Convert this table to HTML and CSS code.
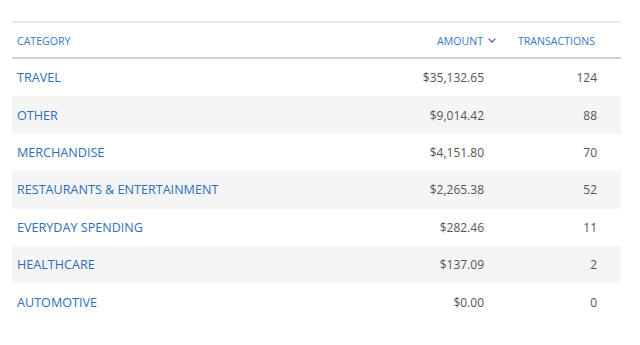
FILE: index.html
```html
<!DOCTYPE html>
<html>
<head>
<meta charset="utf-8">
<link rel="stylesheet" href="styles.css">
</head>
<body>
<table class="spend">
  <thead>
    <tr>
      <th class="col-cat">CATEGORY</th>
      <th class="col-amt">AMOUNT<svg class="chev" width="8" height="5" viewBox="0 0 8 5"><path d="M0.6 0.6 L4 4 L7.4 0.6" fill="none" stroke="#6a5d9e" stroke-width="1.3"/></svg></th>
      <th class="col-tx">TRANSACTIONS</th>
    </tr>
  </thead>
  <tbody>
    <tr><td class="col-cat">TRAVEL</td><td class="col-amt">$35,132.65</td><td class="col-tx">124</td></tr>
    <tr><td class="col-cat">OTHER</td><td class="col-amt">$9,014.42</td><td class="col-tx">88</td></tr>
    <tr><td class="col-cat">MERCHANDISE</td><td class="col-amt">$4,151.80</td><td class="col-tx">70</td></tr>
    <tr><td class="col-cat">RESTAURANTS &amp; ENTERTAINMENT</td><td class="col-amt">$2,265.38</td><td class="col-tx">52</td></tr>
    <tr><td class="col-cat">EVERYDAY SPENDING</td><td class="col-amt">$282.46</td><td class="col-tx">11</td></tr>
    <tr><td class="col-cat">HEALTHCARE</td><td class="col-amt">$137.09</td><td class="col-tx">2</td></tr>
    <tr><td class="col-cat">AUTOMOTIVE</td><td class="col-amt">$0.00</td><td class="col-tx">0</td></tr>
  </tbody>
</table>
</body>
</html>
```
FILE: styles.css
```css
html, body {
  margin: 0;
  padding: 0;
  background: #fff;
}
body {
  padding: 21px 0 0 12px;
  font-family: "Open Sans", "Noto Sans", sans-serif;
}
.spend {
  width: 609px;
  border-collapse: collapse;
  border-top: 2px solid #e8e8e8;
}
.spend th {
  height: 33px;
  font-size: 10.6px;
  font-weight: normal;
  color: #3a78c2;
  border-bottom: 2px solid #d0d0d0;
  padding: 0;
  vertical-align: middle;
  padding-top: 1px;
}
.spend td {
  height: 37.4px;
  padding: 0;
  font-size: 12px;
  vertical-align: middle;
  color: #555;
}
.spend tbody tr:nth-child(even) td {
  background: #f5f5f5;
}
.spend .col-cat {
  text-align: left;
  padding-left: 5px;
}
.spend td.col-cat {
  color: #2e6eb8;
  font-size: 12.6px;
}
.spend .col-amt {
  text-align: right;
  width: 150px;
  padding-right: 15px;
}
.spend th.col-amt {
  padding-right: 3px;
}
.chev {
  margin-left: 5px;
  vertical-align: 2px;
}
.spend .col-tx {
  text-align: right;
  width: 96px;
  padding-right: 24px;
}
.spend th.col-tx {
  padding-right: 26px;
}
```
